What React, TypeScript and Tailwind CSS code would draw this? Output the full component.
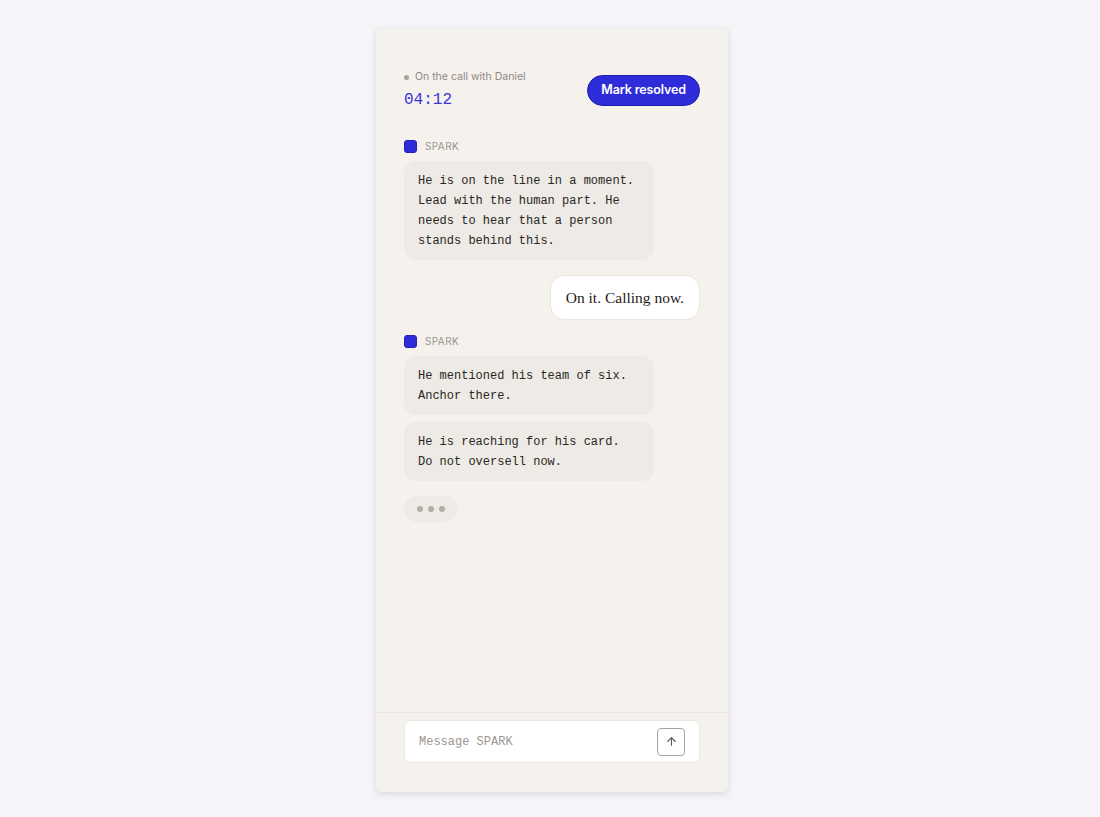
import React from "react";

const mono = "font-['Liberation_Mono','DejaVu_Sans_Mono',monospace]";

function SparkLabel() {
  return (
    <div className="flex items-center gap-2 h-[13px]">
      <span className="w-[13px] h-[13px] rounded-[3px] bg-[#2f2bd8] border border-[#2420b8]" />
      <span className="text-[10px] tracking-[0.04em] text-[#9a948f] font-['Inter',sans-serif]">SPARK</span>
    </div>
  );
}

function SparkBubble({ children }: { children: React.ReactNode }) {
  return (
    <div className={`w-[250px] rounded-[12px] bg-[#eeeae5] px-[14px] pt-[10px] pb-[9px] text-[12px] leading-[20px] text-[#2a2723] ${mono}`}>
      {children}
    </div>
  );
}

export default function App() {
  return (
    <div className="min-h-[817px] w-full bg-[#f5f4f8] flex justify-center pl-[4px] pt-[28px]">
      <div className="w-[352px] h-[764px] rounded-[5px] bg-[#f5f1ed] shadow-[0_2px_6px_rgba(0,0,0,0.12)] flex flex-col">
        <div className="flex-1 px-[28px] pt-[41px]">
          {/* call status header */}
          <div className="flex items-center justify-between">
            <div className="flex flex-col">
              <div className="flex items-center gap-[6px] h-[16px]">
                <span className="w-[5px] h-[5px] rounded-full bg-[#a8a29c]" />
                <span className="text-[10.5px] text-[#8f8984] font-['Inter',sans-serif]">On the call with Daniel</span>
              </div>
              <div className={`mt-[3px] text-[16px] leading-[24px] text-[#3b37d6] ${mono}`}>04:12</div>
            </div>
            <button className="h-[31px] px-[13px] rounded-full bg-[#2e2bd9] border border-[#1f1cb0] text-white text-[12.5px] font-semibold font-['Inter',sans-serif] tracking-[-0.01em]">
              Mark resolved
            </button>
          </div>

          {/* conversation */}
          <div className="mt-[28px] flex flex-col gap-[15px]">
            <div className="flex flex-col gap-[8px]">
              <SparkLabel />
              <SparkBubble>
                He is on the line in a moment. Lead with the human part. He needs to hear that a person stands behind this.
              </SparkBubble>
            </div>

            <div className="flex justify-end">
              <div className="h-[45px] px-[15px] flex items-center rounded-[14px] bg-white border border-[#ebe4dc] text-[15.5px] text-[#1f1c19] font-['Liberation_Serif','DejaVu_Serif',serif]">
                On it. Calling now.
              </div>
            </div>

            <div className="flex flex-col gap-[8px]">
              <SparkLabel />
              <div className="flex flex-col gap-[7px]">
                <SparkBubble>He mentioned his team of six. Anchor there.</SparkBubble>
                <SparkBubble>He is reaching for his card. Do not oversell now.</SparkBubble>
              </div>
            </div>

            <div className="w-[54px] h-[26px] rounded-full bg-[#eeeae5] flex items-center justify-center gap-[5px]">
              <span className="w-[6px] h-[6px] rounded-full bg-[#b3ada7]" />
              <span className="w-[6px] h-[6px] rounded-full bg-[#b3ada7]" />
              <span className="w-[6px] h-[6px] rounded-full bg-[#b3ada7]" />
            </div>
          </div>
        </div>

        {/* composer */}
        <div className="border-t border-[#ebe6e0] px-[28px] pt-[7px] pb-[29px]">
          <div className="h-[43px] rounded-[7px] bg-white border border-[#ece7e1] flex items-center pl-[14px] pr-[14px]">
            <span className={`flex-1 text-[12px] text-[#9b9590] ${mono}`}>Message SPARK</span>
            <button className="w-[28px] h-[28px] rounded-[4px] border border-[#a9a39d] flex items-center justify-center">
              <svg width="13" height="13" viewBox="0 0 24 24" fill="none" stroke="#5c5650" strokeWidth="2" strokeLinecap="round" strokeLinejoin="round">
                <path d="M12 19V5" />
                <path d="M5 12l7-7 7 7" />
              </svg>
            </button>
          </div>
        </div>
      </div>
    </div>
  );
}
